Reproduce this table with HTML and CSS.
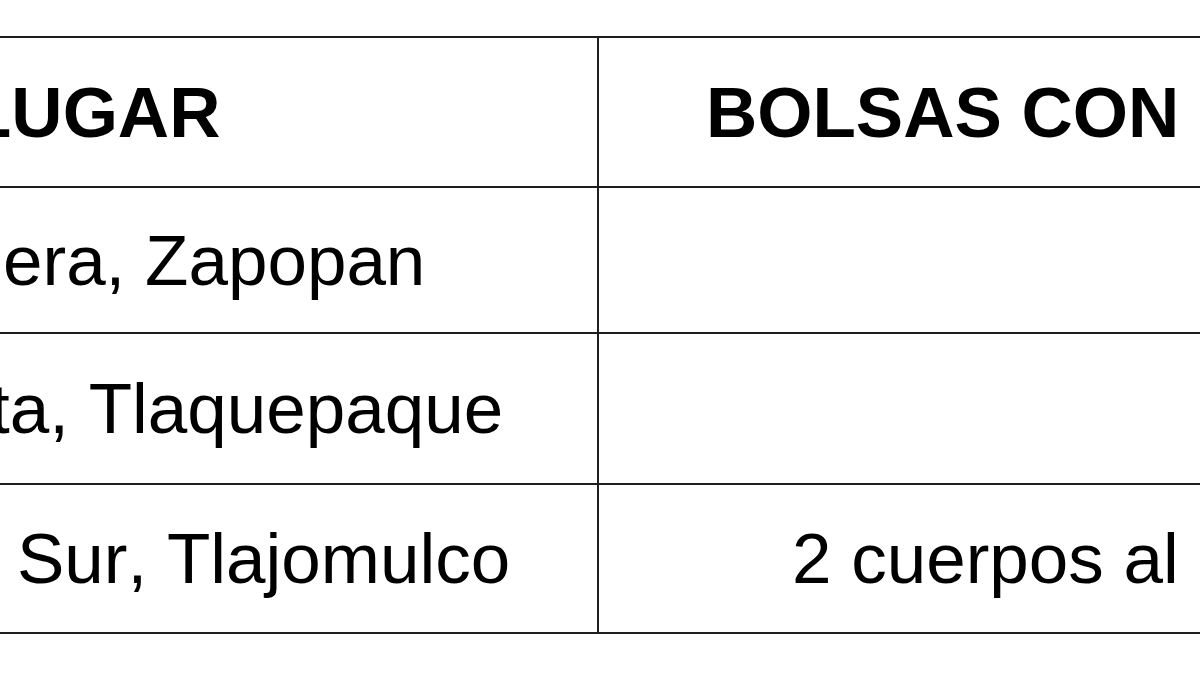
FILE: index.html
```html
<!DOCTYPE html>
<html lang="es">
<head>
<meta charset="utf-8">
<title>Tabla</title>
<link rel="stylesheet" href="styles.css">
</head>
<body>
<div class="page">
  <div class="table">
    <div class="cell c1 head r0"><span class="txt ind-h">LUGAR</span></div>
    <div class="cell c2 head r0"><span class="txt pad-h">BOLSAS CON</span></div>

    <div class="cell c1 r1"><span class="txt ind-1">era, Zapopan</span></div>
    <div class="cell c2 r1"></div>

    <div class="cell c1 r2"><span class="txt ind-2">ta, Tlaquepaque</span></div>
    <div class="cell c2 r2"></div>

    <div class="cell c1 r3"><span class="txt ind-3">Sur, Tlajomulco</span></div>
    <div class="cell c2 r3"><span class="txt pad-3">2 cuerpos al</span></div>
  </div>
</div>
</body>
</html>
```

FILE: styles.css
```css
html, body {
  margin: 0;
  padding: 0;
  background: #ffffff;
  overflow: hidden;
}

body {
  width: 1200px;
  height: 675px;
  font-family: "Liberation Sans", Arial, Helvetica, sans-serif;
  color: #000;
  font-kerning: none;
}

.page {
  padding-top: 36px;
}

.table {
  display: grid;
  grid-template-columns: 599px 601px;
  grid-template-rows: 150px 146px 151px 149px;
  border-top: 2px solid #1e1e1e;
  width: 1200px;
}

.cell {
  display: flex;
  align-items: center;
  border-bottom: 2px solid #1e1e1e;
  overflow: hidden;
  white-space: nowrap;
  font-size: 71px;
  line-height: normal;
}

.c1 {
  border-right: 2px solid #1e1e1e;
}

.head {
  font-weight: bold;
}

.txt {
  display: block;
}

.ind-h { margin-left: -32px; }
.ind-1 { margin-left: 3px; }
.ind-2 { margin-left: -10px; }
.ind-3 { margin-left: 17px; }

.pad-h { margin-left: 107px; }
.pad-3 { margin-left: 193px; }
```
